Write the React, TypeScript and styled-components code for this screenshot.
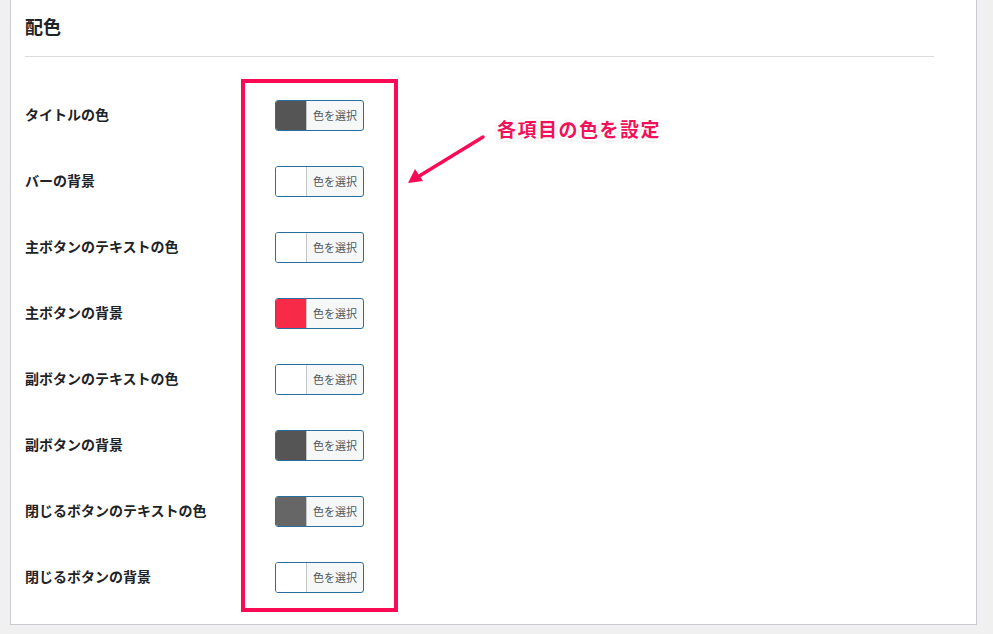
import React from "react";
import styled, { createGlobalStyle } from "styled-components";

const GlobalStyle = createGlobalStyle`
  html, body {
    margin: 0;
    padding: 0;
    background: #f0f0f1;
    font-family: "Noto Sans CJK JP", "Noto Sans", sans-serif;
    color: #1d2327;
  }
  #root { min-height: 634px; }
`;

const Page = styled.div`
  position: relative;
  width: 993px;
  height: 634px;
  overflow: hidden;
  padding-left: 10px;
  box-sizing: border-box;
`;

const Panel = styled.section`
  width: 967px;
  height: 625px;
  box-sizing: border-box;
  background: #fff;
  border: 1px solid #c8cbcf;
  border-top: none;
  padding: 10px 42px 0 14px;
`;

const Heading = styled.h2`
  margin: 0;
  font-size: 18px;
  font-weight: 700;
  line-height: 32px;
  color: #1d2327;
  padding-bottom: 14px;
  border-bottom: 1px solid #dcdcde;
`;

const Rows = styled.div`
  display: flex;
  flex-direction: column;
  padding-top: 25px;
`;

const Row = styled.div`
  display: flex;
  align-items: center;
  height: 66px;
`;

const Label = styled.div`
  width: 250px;
  font-size: 14px;
  font-weight: 700;
  color: #1d2327;
  margin-top: -2px;
`;

const ColorButton = styled.button`
  display: flex;
  align-items: stretch;
  height: 31px;
  width: 89px;
  padding: 0;
  border: 1px solid #2a6f9c;
  border-radius: 3px;
  overflow: hidden;
  background: #f6f7f7;
  cursor: pointer;
  box-sizing: border-box;
`;

const Swatch = styled.span<{ $color: string }>`
  width: 30px;
  background: ${(p) => p.$color};
  border-right: 1px solid #c3c4c7;
`;

const ButtonText = styled.span`
  flex: 1;
  display: flex;
  align-items: center;
  justify-content: center;
  font-size: 11px;
  color: #50575e;
  font-family: "Noto Sans CJK JP", sans-serif;
`;

const Highlight = styled.div`
  position: absolute;
  left: 241px;
  top: 79px;
  width: 157px;
  height: 533px;
  box-sizing: border-box;
  border: 4px solid #fb0a55;
  pointer-events: none;
`;

const Callout = styled.div`
  position: absolute;
  left: 497px;
  top: 115px;
  font-size: 19px;
  font-weight: 700;
  color: #f0135a;
  letter-spacing: 1.5px;
  font-family: "Noto Sans CJK JP", sans-serif;
  text-shadow:
    -2px 0 0 #fff, 2px 0 0 #fff, 0 -2px 0 #fff, 0 2px 0 #fff,
    -2px -2px 0 #fff, 2px 2px 0 #fff, -2px 2px 0 #fff, 2px -2px 0 #fff,
    0 1px 5px rgba(0, 0, 0, 0.35);
`;

const Arrow = styled.svg`
  position: absolute;
  left: 400px;
  top: 125px;
  overflow: visible;
`;

const items: { label: string; color: string }[] = [
  { label: "タイトルの色", color: "#555555" },
  { label: "バーの背景", color: "#ffffff" },
  { label: "主ボタンのテキストの色", color: "#ffffff" },
  { label: "主ボタンの背景", color: "#f72b47" },
  { label: "副ボタンのテキストの色", color: "#ffffff" },
  { label: "副ボタンの背景", color: "#555555" },
  { label: "閉じるボタンのテキストの色", color: "#666666" },
  { label: "閉じるボタンの背景", color: "#ffffff" },
];

export default function App() {
  return (
    <>
      <GlobalStyle />
      <Page>
        <Panel>
          <Heading>配色</Heading>
          <Rows>
            {items.map((it) => (
              <Row key={it.label}>
                <Label>{it.label}</Label>
                <ColorButton type="button">
                  <Swatch $color={it.color} />
                  <ButtonText>色を選択</ButtonText>
                </ColorButton>
              </Row>
            ))}
          </Rows>
        </Panel>
        <Highlight />
        <Arrow width="90" height="65" viewBox="0 0 90 65">
          <line x1="83" y1="12" x2="16" y2="53" stroke="#fb0a55" strokeWidth="3.5" strokeLinecap="round" />
          <polygon points="8,58 15,44 23,56" fill="#fb0a55" />
        </Arrow>
        <Callout>各項目の色を設定</Callout>
      </Page>
    </>
  );
}
